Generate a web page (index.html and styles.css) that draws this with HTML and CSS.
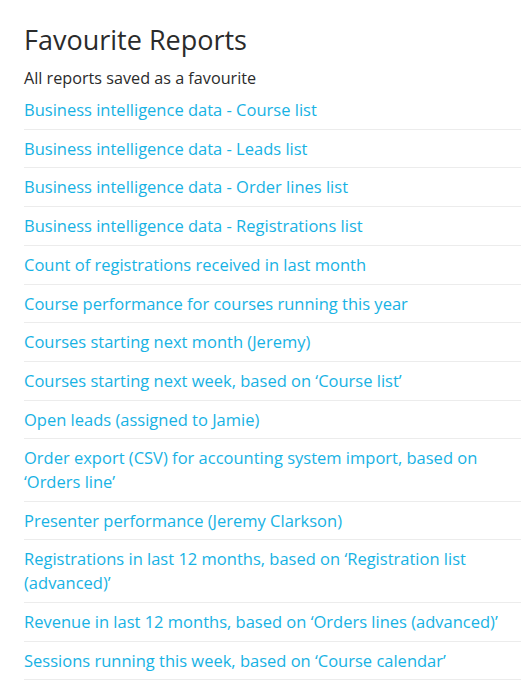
FILE: index.html
```html
<!DOCTYPE html>
<html lang="en">
<head>
  <meta charset="UTF-8" />
  <title>Favourite Reports</title>
  <link rel="stylesheet" href="styles.css">
</head>
<body>

  <div class="reports">
    <h1>Favourite Reports</h1>
    <p class="intro">All reports saved as a favourite</p>

    <ul class="report-list">
      <li><a href="#">Business intelligence data - Course list</a></li>
      <li><a href="#">Business intelligence data - Leads list</a></li>
      <li><a href="#">Business intelligence data - Order lines list</a></li>
      <li><a href="#">Business intelligence data - Registrations list</a></li>
      <li><a href="#">Count of registrations received in last month</a></li>
      <li><a href="#">Course performance for courses running this year</a></li>
      <li><a href="#">Courses starting next month (Jeremy)</a></li>
      <li><a href="#">Courses starting next week, based on ‘Course list’</a></li>
      <li><a href="#">Open leads (assigned to Jamie)</a></li>
      <li><a href="#">Order export (CSV) for accounting system import, based on ‘Orders line’</a></li>
      <li><a href="#">Presenter performance (Jeremy Clarkson)</a></li>
      <li><a href="#">Registrations in last 12 months, based on ‘Registration list (advanced)’</a></li>
      <li><a href="#">Revenue in last 12 months, based on ‘Orders lines (advanced)’</a></li>
      <li><a href="#">Sessions running this week, based on ‘Course calendar’</a></li>
    </ul>
  </div>

</body>
</html>
```

FILE: styles.css
```css
body {
  margin: 0;
  font-family: "Open Sans", "Liberation Sans", sans-serif;
  background-color: #fff;
  color: #2b2b2b;
}

.reports {
  padding: 24px 0 0 24px;
}

h1 {
  margin: 0;
  font-size: 27px;
  font-weight: 400;
  line-height: 32px;
  color: #2b2b2b;
}

.intro {
  margin: 10px 0 1px;
  font-size: 16.2px;
  line-height: 24px;
}

.report-list {
  list-style: none;
  margin: 0;
  padding: 0;
}

.report-list li {
  padding: 7px 0;
  border-bottom: 1px solid #ececec;
  font-size: 16.5px;
  line-height: 23.7px;
}

.report-list a {
  color: #17b2e4;
  text-decoration: none;
}
```
